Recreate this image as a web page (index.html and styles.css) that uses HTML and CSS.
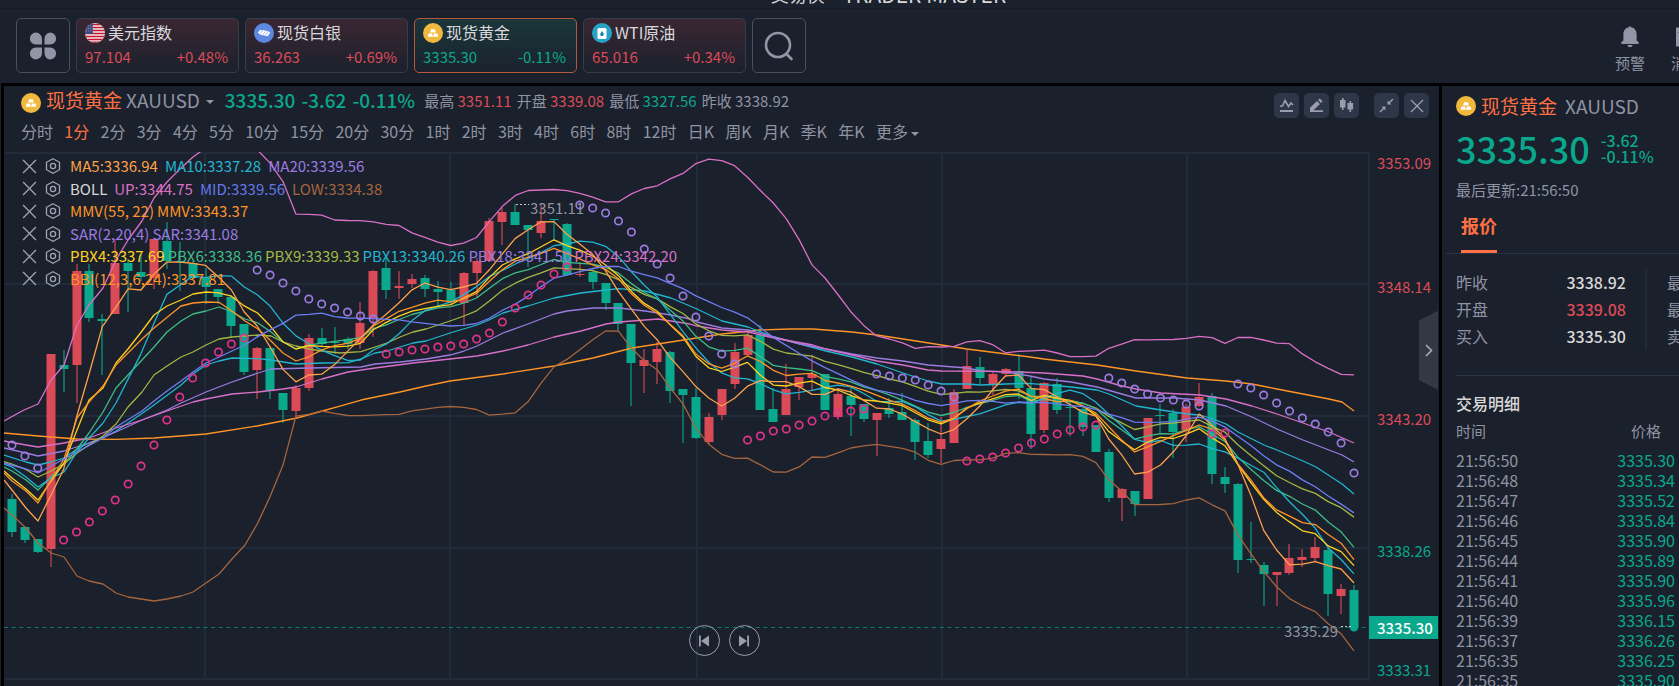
FILE: index.html
```html
<!DOCTYPE html>
<html lang="zh-CN">
<head>
<meta charset="utf-8">
<title>现货黄金 XAUUSD</title>
<link rel="stylesheet" href="styles.css">
</head>
<body>
<svg class="defs" aria-hidden="true">
  <defs>
    <symbol id="gold" viewBox="0 0 20 20">
      <circle cx="10" cy="10" r="10" fill="#f0b93e"/>
      <path d="M8 6.300h4l.8 3.100H7.200zM5.500 10.600h3.700l.7 3.100H4.700zM10.800 10.600h3.700l.8 3.100h-5.200z" fill="#fff"/>
    </symbol>
    <symbol id="close" viewBox="0 0 14 14"><path d="M1 1l12 12M13 1L1 13" fill="none" stroke="#a0a4b2" stroke-width="1.200"/></symbol>
    <symbol id="gear" viewBox="0 0 16 16">
      <path d="M8 .8l6.500 3.500v7.400L8 15.200 1.500 11.700V4.300z" fill="none" stroke="#a0a4b2" stroke-width="1.300"/>
      <circle cx="8" cy="8" r="2.600" fill="none" stroke="#a0a4b2" stroke-width="1.300"/>
    </symbol>
  </defs>
</svg>
<div class="brand"><span>交易侠</span><span class="brand-en">TRADER MASTER</span></div>
<header class="header">
  <nav class="quotes">
    <button class="square" aria-label="全部">
      <svg width="28" height="28" viewBox="0 0 28 28" fill="#9195a5"><path d="M7 .5a6.200 6.200 0 0 1 6 6.200V12.500H6.800A6 6 0 0 1 7 .5zM21 .5a6 6 0 0 1 .2 12H15.500V6.700A6.200 6.200 0 0 1 21 .5zM7 27.500a6 6 0 0 1-.2-12H13v5.800a6.200 6.200 0 0 1-6 6.200zM21 27.500a6.200 6.200 0 0 1-5.500-6.200V15.500h5.700a6 6 0 0 1-.2 12z"/></svg>
    </button>
    <button class="card up">
      <span class="card-name"><svg width="20" height="20" viewBox="0 0 20 20"><clipPath id="flag"><circle cx="10" cy="10" r="10"/></clipPath><g clip-path="url(#flag)"><path fill="#f2eef2" d="M0 0h20v20H0z"/><path d="M0 1.500h20M0 4.500h20M0 7.500h20M0 10.500h20M0 13.500h20M0 16.500h20M0 19.300h20" stroke="#c8142f" stroke-width="1.500"/><path fill="#3f4a80" d="M0 0h8v11H0z"/><path d="M1 3h7M1 5.500h7M1 8h7" stroke="#8d94bd" stroke-width=".8" stroke-dasharray="1 1"/></g></svg><span>美元指数</span></span>
      <span class="card-data"><span>97.104</span><span>+0.48%</span></span>
    </button>
    <button class="card up">
      <span class="card-name"><svg width="20" height="20" viewBox="0 0 20 20"><circle cx="10" cy="10" r="10" fill="#5c88e0"/><path d="M3.800 9.500L6.500 6.800l2 .6.800-.6 1.800 1 .8-.4 1.700 1.100.8-.3 1.800 1.300-2.400 3.700-1.600-.5-.8.4-1.800-1-.8.4-1.800-1-.7.200z" fill="#fff"/><path d="M6.300 10.500l2.500-3M8.800 11.500l2.500-3M11.200 12.500l2.500-3.200" stroke="#5c88e0" stroke-width=".6"/></svg><span>现货白银</span></span>
      <span class="card-data"><span>36.263</span><span>+0.69%</span></span>
    </button>
    <button class="card down active">
      <span class="card-name"><svg width="20" height="20"><use href="#gold"/></svg><span>现货黄金</span></span>
      <span class="card-data"><span>3335.30</span><span>-0.11%</span></span>
    </button>
    <button class="card up">
      <span class="card-name"><svg width="20" height="20" viewBox="0 0 20 20"><circle cx="10" cy="10" r="10" fill="#27a3c6"/><rect x="5.500" y="5" width="9" height="11" rx="1.500" fill="#fff"/><path d="M10 7.800l1.600 2.600a1.800 1.800 0 1 1-3.200 0z" fill="#1789a8"/></svg><span>WTI原油</span></span>
      <span class="card-data"><span>65.016</span><span>+0.34%</span></span>
    </button>
    <button class="square" aria-label="搜索">
      <svg width="30" height="30" viewBox="0 0 30 30" fill="none" stroke="#9195a5" stroke-width="2.600" stroke-linecap="round"><circle cx="14" cy="14" r="12"/><path d="M22.500 23l5 5"/></svg>
    </button>
  </nav>
  <div class="actions">
    <a class="action" href="#alert"><svg width="22" height="22" viewBox="0 0 22 22" fill="#9195a5"><path d="M10 1.200a1 1 0 0 1 2 0c3.600.7 5.600 3.300 5.600 7v6.300l2 1.500q.8 1.800-.6 2H3q-1.400-.2-.6-2l2-1.500V8.200c0-3.700 2-6.300 5.600-7zM8.200 19h5.600q-.8 2.200-2.800 2.200T8.200 19z"/></svg>预警</a>
    <a class="action" href="#message"><svg width="24" height="22" viewBox="0 0 24 22"><path d="M2 1.500h20v19H2z" fill="#9195a5"/><path d="M5 6l7 5 7-5" fill="none" stroke="#1a202c" stroke-width="2"/></svg>消息</a>
  </div>
</header>
<div class="body">
  <main class="main">
    <div class="title">
      <svg width="20" height="20"><use href="#gold"/></svg>
      <h1>现货黄金</h1>
      <button class="symbol">XAUUSD<i class="caret"></i></button>
      <strong class="last">3335.30</strong><strong class="last">-3.62</strong><strong class="last">-0.11%</strong>
      <span class="stats"><span>最高 <b class="r">3351.11</b></span><span>开盘 <b class="r">3339.08</b></span><span>最低 <b class="g">3327.56</b></span><span>昨收 3338.92</span></span>
    </div>
    <div class="tools">
      <button aria-label="指标"><svg width="15" height="15" viewBox="0 0 15 15" fill="none" stroke="#9a9eac" stroke-width="1.600"><path d="M1 8h2.500L6 2.500 9.500 8.500 12 5l2 2"/><path d="M1 13h13" stroke-width="2"/></svg></button>
      <button aria-label="画线"><svg width="15" height="15" viewBox="0 0 15 15" fill="#9a9eac"><path d="M1 13V9.800L8 3l3 3-6.500 6.200H14V14H1zM9 2l1.800-1.500L13.500 3.200 12 5z"/></svg></button>
      <button aria-label="图表类型"><svg width="15" height="15" viewBox="0 0 15 15" fill="#9a9eac"><path d="M3 0h1.600v2h1.900v7.500H4.600V12H3V9.500H1V2h2zM10.500 3h1.600v2h2v6.500h-2V14h-1.600v-2.500h-2V5h2z"/></svg></button>
      <button class="apart" aria-label="缩小"><svg width="15" height="15" viewBox="0 0 15 15" fill="#9a9eac" stroke="#9a9eac"><path d="M14 1l-4 4M1 14l4-4" stroke-width="1.500"/><path d="M8.500 2.500v4h4zM6.500 12.500v-4h-4z" stroke="none"/></svg></button>
      <button aria-label="关闭"><svg width="14" height="14"><use href="#close"/></svg></button>
    </div>
    <nav class="periods">
      <button>分时</button><button class="on">1分</button><button>2分</button><button>3分</button><button>4分</button><button>5分</button><button>10分</button><button>15分</button><button>20分</button><button>30分</button><button>1时</button><button>2时</button><button>3时</button><button>4时</button><button>6时</button><button>8时</button><button>12时</button><button>日K</button><button>周K</button><button>月K</button><button>季K</button><button>年K</button><button>更多<i class="caret"></i></button>
    </nav>
    <section class="chart">
      <svg class="plot" id="plot" viewBox="4 150 1435 536" preserveAspectRatio="xMinYMin slice" role="img" aria-label="K线图"></svg>
      <ul class="legend" id="legend"></ul>
      <div class="player">
        <button aria-label="后退"><svg width="12" height="12" viewBox="0 0 12 12" fill="#9a9eac"><path d="M1 .5h1.800v11H1zM11 .5v11L3 6z"/></svg></button>
        <button aria-label="前进"><svg width="12" height="12" viewBox="0 0 12 12" fill="#9a9eac"><path d="M9.200.5H11v11H9.200zM1 .5v11L9 6z"/></svg></button>
      </div>
      <button class="fold" aria-label="收起"><svg width="8" height="13" viewBox="0 0 8 13" fill="none" stroke="#a9adb9" stroke-width="1.600"><path d="M1 1l5.500 5.500L1 12"/></svg></button>
    </section>
  </main>
  <aside class="side">
    <div class="side-in">
      <div class="side-title"><svg width="20" height="20"><use href="#gold"/></svg><h2>现货黄金</h2><span>XAUUSD</span></div>
      <div class="side-price"><strong>3335.30</strong><div><b>-3.62</b><b>-0.11%</b></div></div>
      <p class="updated">最后更新:21:56:50</p>
      <div class="tabs"><button>报价</button></div>
      <div class="facts">
        <dl><dt>昨收</dt><dd>3338.92</dd><dt>开盘</dt><dd class="r">3339.08</dd><dt>买入</dt><dd>3335.30</dd></dl>
        <dl class="second"><dt>最高</dt><dd class="r">3351.11</dd><dt>最低</dt><dd class="g">3327.56</dd><dt>卖出</dt><dd>3335.60</dd></dl>
      </div>
      <h3>交易明细</h3>
      <table class="trades">
        <thead><tr><th>时间</th><th class="price-head">价格</th></tr></thead>
        <tbody>
          <tr><td>21:56:50</td><td>3335.30</td></tr>
          <tr><td>21:56:48</td><td>3335.34</td></tr>
          <tr><td>21:56:47</td><td>3335.52</td></tr>
          <tr><td>21:56:46</td><td>3335.84</td></tr>
          <tr><td>21:56:45</td><td>3335.90</td></tr>
          <tr><td>21:56:44</td><td>3335.89</td></tr>
          <tr><td>21:56:41</td><td>3335.90</td></tr>
          <tr><td>21:56:40</td><td>3335.96</td></tr>
          <tr><td>21:56:39</td><td>3336.15</td></tr>
          <tr><td>21:56:37</td><td>3336.26</td></tr>
          <tr><td>21:56:35</td><td>3336.25</td></tr>
          <tr><td>21:56:35</td><td>3335.90</td></tr>
        </tbody>
      </table>
    </div>
  </aside>
</div>
<script src="chart.js"></script>
</body>
</html>
```

FILE: styles.css
```css
* { box-sizing: border-box; }
body {
  margin: 0;
  height: 100vh;
  overflow: hidden;
  display: flex;
  flex-direction: column;
  background: #1a202c;
  color: #8f93a2;
  font-family: "Noto Sans CJK SC", sans-serif;
  font-size: 16px;
  line-height: 20px;
}
button {
  font: inherit;
  color: inherit;
  background: none;
  border: 0;
  padding: 0;
  cursor: pointer;
}
svg { display: block; flex: none; }
h1, h2, h3, p, dl, dd, ul { margin: 0; padding: 0; }
b { font-weight: 400; }
i { font-style: normal; }
.defs { position: absolute; width: 0; height: 0; }
.r { color: #dc4b57; }
.g { color: #0ba78c; }

.brand {
  flex: none;
  height: 9px;
  overflow: hidden;
  border-bottom: 1px solid #161b26;
  display: flex;
  align-items: flex-end;
  justify-content: center;
  gap: 18px;
  padding: 0 0 4px 98px;
  color: #d8d8d8;
  font-size: 18px;
}
.brand-en { font-size: 21px; }

.header {
  flex: none;
  height: 74px;
  padding: 9px 0 0 16px;
  display: flex;
  justify-content: space-between;
  overflow: hidden;
}
.quotes { display: flex; gap: 6px; height: 55px; }
.square {
  width: 54px;
  border: 1px solid #4a4f5c;
  border-radius: 5px;
  display: flex;
  align-items: center;
  justify-content: center;
}
.card {
  width: 163px;
  padding: 4px 10px 5px 8px;
  border: 1px solid #363c4a;
  border-radius: 5px;
  display: flex;
  flex-direction: column;
  justify-content: space-between;
}
.up { background: linear-gradient(#3a2733, #1b212d); color: #dc4b57; }
.down { background: linear-gradient(#1b363b, #1a222e); color: #0ba78c; }
.active { border-color: #b5583a; }
.card-name { display: flex; align-items: center; gap: 3px; color: #d8d9dc; }
.card-name span { padding-bottom: 2px; line-height: 18px; }
.card-data { display: flex; justify-content: space-between; font-size: 15px; }
.actions { display: flex; width: 80px; gap: 26px; padding: 8px 0 0 16px; }
.action {
  flex: 0 0 30px;
  display: flex;
  flex-direction: column;
  align-items: center;
  gap: 5px;
  color: inherit;
  font-size: 15px;
  text-decoration: none;
  white-space: nowrap;
}

.body {
  flex: 1;
  min-height: 0;
  display: flex;
  gap: 3px;
  background: #000;
  border-left: 1px solid #1a202c;
  padding: 3px 0 0 3px;
}
.main {
  flex: 1;
  min-width: 0;
  background: #1a202c;
  display: grid;
  grid-template: 32px 32px 1fr / 1fr auto;
}
.title {
  display: flex;
  align-items: center;
  padding: 0 0 5px 17px;
  white-space: nowrap;
}
.title > svg { margin-top: 6px; }
.title h1 { font-size: 19px; font-weight: 400; color: #ff7043; margin: 0 4px 0 5px; }
.symbol { font-size: 19px; margin-right: 11px; }
.caret {
  display: inline-block;
  border: 4px solid transparent;
  border-top-color: #9195a5;
  border-bottom: 0;
  vertical-align: middle;
  margin-left: 6px;
}
.periods .caret { margin-left: 3px; }
.last { font-size: 19px; font-weight: 500; color: #0ba78c; margin-right: 6px; }
.stats { display: flex; gap: 5px; font-size: 15px; padding: 2px 0 0 3px; }
.tools { display: flex; gap: 5px; padding: 7px 10px 0 0; }
.tools button {
  width: 25px;
  height: 25px;
  border-radius: 5px;
  background: #2d3748;
  display: flex;
  align-items: center;
  justify-content: center;
}
.tools .apart { margin-left: 10px; }
.periods {
  grid-column: 1 / 3;
  display: flex;
  justify-content: space-between;
  max-width: 915px;
  padding-left: 17px;
  align-items: flex-start;
  white-space: nowrap;
  line-height: 26px;
}
.on { color: #ff7043; }

.chart { grid-column: 1 / 3; position: relative; min-height: 0; overflow: hidden; }
.plot { width: 100%; height: 100%; }
.plot text { font-size: 15px; fill: #8f93a2; }
.plot .r { fill: #dc4b57; }
.plot .g { fill: #0ba78c; }
.plot .tag { fill: #fff; font-weight: 500; }
.grid { stroke: #222b3a; stroke-width: 2; }
.legend {
  position: absolute;
  left: 18px;
  top: 5px;
  height: 135px;
  display: flex;
  flex-direction: column;
  justify-content: space-between;
  list-style: none;
  font-size: 15px;
  line-height: 22px;
  white-space: nowrap;
}
.legend li { display: flex; align-items: center; }
.legend button { margin-right: 8px; }
.legend button + button { margin-right: 9px; }
.legend .wide { margin-right: 7px; }
.legend .near { margin-right: 3px; }
.player {
  position: absolute;
  left: 0;
  right: 0;
  bottom: 30px;
  display: flex;
  justify-content: center;
  gap: 9px;
  padding-left: 5px;
}
.player button {
  width: 31px;
  height: 31px;
  border: 1px solid #9a9eac;
  border-radius: 50%;
  display: flex;
  align-items: center;
  justify-content: center;
}
.fold {
  position: absolute;
  right: 1px;
  top: 30%;
  width: 19px;
  height: 79px;
  background: #333844;
  clip-path: polygon(0 12%, 100% 0, 100% 100%, 0 88%);
  display: flex;
  align-items: center;
  justify-content: center;
}

.side { flex: 0 0 237px; background: #1a202c; overflow: hidden; }
.side-in { width: 420px; padding: 10px 0 0 14px; }
.side-title { display: flex; align-items: center; font-size: 19px; }
.side-title h2 { font-size: 19px; font-weight: 400; color: #ff7043; margin: 0 8px 0 5px; }
.side-price {
  display: flex;
  align-items: center;
  gap: 11px;
  height: 64px;
  color: #0ba78c;
}
.side-price strong { font-size: 36px; font-weight: 500; line-height: 40px; }
.side-price b { display: block; font-weight: 500; line-height: 16px; }
.updated { font-size: 15px; }
.tabs { margin: 12px 0 0 -10px; padding-left: 15px; border-bottom: 1px solid #2a3343; }
.tabs button {
  font-size: 18px;
  font-weight: 700;
  color: #ff7043;
  padding: 0 0 12px;
  height: 41px;
  border-bottom: 3px solid #ff7043;
}
.facts { display: flex; padding: 15px 0 25px; border-bottom: 1px solid #2d3646; }
.facts dl {
  width: 191px;
  padding-right: 19px;
  border-right: 2px solid #222937;
  display: grid;
  grid-template-columns: auto auto;
  justify-content: space-between;
  line-height: 27px;
}
.facts .second { padding: 0 0 0 20px; border: 0; }
.facts dd { text-align: right; font-weight: 500; }
.facts dd:not([class]) { color: #d8d8d8; }
.side h3 { font-size: 16px; font-weight: 500; color: #d8d8d8; margin: 17px 0 6px; }
.trades { border-collapse: collapse; width: 219px; }
.trades th { padding: 2px 0 9px; font-size: 15px; font-weight: 400; text-align: left; }
.trades .price-head { text-align: right; padding-right: 14px; }
.trades td { padding: 0; }
.trades td + td { text-align: right; color: #0ba78c; }
```

FILE: chart.js
```js
// Candles: direction (1 = up), body top, body bottom, wick top, wick bottom
const candles = [
[0,499,532,494,537],[0,527,540,527,543],[0,539,552,539,553],[1,354,549,354,567],[0,365,369,350,392],
[1,271,365,264,403],[0,271,318,264,322],[0,319,321,314,375],[1,263,314,239,314],[0,263,271,259,312],
[0,272,277,254,281],[1,239,278,239,289],[0,241,261,222,269],[0,261,262,242,291],[0,263,278,261,279],
[0,277,287,268,304],[0,289,297,289,304],[0,297,326,295,337],[0,324,372,324,375],[1,348,370,347,399],
[0,348,391,347,399],[0,393,410,393,423],[1,388,411,385,418],[1,338,388,334,391],[0,338,344,328,347],
[0,342,343,327,354],[0,339,344,337,349],[1,323,343,302,349],[1,271,319,270,337],[0,268,290,258,299],
[1,286,288,271,299],[1,279,284,274,288],[0,278,289,275,297],[0,289,292,281,308],[0,290,302,282,305],
[1,273,303,272,325],[1,261,273,258,298],[1,221,261,218,261],[1,212,222,207,245],[0,212,225,204,225],
[0,225,230,225,267],[1,221,233,204,238],[0,219,220,219,241],[0,224,275,223,275],[1,274,275,262,277],
[0,272,282,269,289],[0,283,303,283,310],[0,303,324,303,332],[0,324,363,324,406],[1,360,366,349,393],
[1,349,362,342,384],[0,352,391,351,403],[0,389,395,389,443],[0,397,438,388,439],[1,417,442,413,444],
[1,389,415,389,420],[1,352,384,343,389],[1,335,355,332,355],[0,335,410,325,410],[0,409,422,388,422],
[1,389,415,364,415],[1,377,387,377,400],[1,374,378,355,390],[0,374,410,374,410],[1,394,417,388,420],
[0,396,405,386,436],[0,404,419,404,422],[1,413,420,413,456],[0,408,414,398,418],[0,412,420,393,420],
[0,420,442,418,460],[0,441,455,423,458],[1,439,449,417,463],[1,392,443,389,443],[1,366,389,349,389],
[0,367,378,357,384],[1,374,384,372,395],[1,369,374,368,377],[0,371,388,354,399],[0,388,434,376,449],
[1,383,430,382,433],[0,384,410,378,414],[0,407,408,402,436],[0,409,427,407,436],[0,425,452,425,452],
[0,452,498,449,502],[1,489,498,488,521],[0,491,504,491,516],[1,418,499,418,499],[0,415,416,404,433],
[0,413,432,409,458],[1,407,430,404,442],[1,397,406,383,407],[0,396,474,393,484],[0,477,484,467,493],
[0,484,560,483,573],[0,559,560,522,563],[0,565,574,562,606],[1,572,575,572,606],[1,558,573,544,575],
[1,557,560,549,567],[1,547,558,537,562],[0,550,594,546,616],[1,589,596,584,614],[0,590,628,585,628]];
const X = i => 12 + 12.904 * i;
const close = candles.map(c => c[0] ? c[1] : c[2]);
const mean = (i, n) => close.slice(i - n + 1, i + 1).reduce((a, b) => a + b, 0) / n;
const dev = i => { const m = mean(i, 20); return Math.sqrt(close.slice(i - 19, i + 1).reduce((a, b) => a + (b - m) ** 2, 0) / 20); };
const ema = n => { let e = 520; return close.map(c => e += (c - e) * 2 / (n + 1)); };
const pbx = n => { const e = ema(n); return i => (e[i] + mean(i, 2 * n) + mean(i, 4 * n)) / 3; };
const lines = [
 ['#ff9427', [4,433,38,436,77,439,116,439.3,154,438,206,434,257,426,297,418,326,410,340,406,361,400,400,392,426,386,450,381,503,374,554,366,593,358,632,348,690,339,722,334,760,330,790,329,813,329,852,332,877,335,916,341,967,349,1030,357,1044,359,1097,365,1136,371,1187,378,1226,381,1252,384,1277,389,1303,394,1329,399,1342,402,1354,411]],
 ['#22b5cf', [4,455,26,462,38,465,51,462,64,458,77,449,89,443,103,438,116,431,128,423,147,410,154,405,181,385,193,374,206,365,219,361,232,358,258,358.7,271,360,296,364,322,363,348,362.7,361,359,375,353,387,351,413,343,426,341,450,333,477,325,489,320,503,313,528,306,554,298,581,293,606,290,619,288.7,645,291,671,298,697,309,722,321,748,327,774,337,800,344,826,351,852,357,877,364,903,373,928,381,942,384,967,384,981,385,1006,384,1028,383.300,1044,384.700,1071,387,1097,390,1109,394,1136,406,1161,410,1187,414,1200,415,1213,419,1226,424,1238,432,1264,445,1277,450,1303,461,1316,467,1342,484,1354,494]],
 ['#9b7be0', [4,448,26,453,38,456,64,451,89,443,116,432,142,420,167,410,181,403,206,392,232,382,258,373,271,369,309,368,361,367,375,364,400,362,426,359,450,355,464,351,477,346,503,333,528,324,554,314,567,311,593,308,619,308,645,311,671,315,690,319,697,322,722,328,748,330,774,337,800,344,826,349,852,354,877,358,903,361,928,365,954,367,967,368,981,371,1006,372,1030,376,1044,379,1071,382,1097,387,1136,398,1174,398,1200,400,1226,406,1252,417,1277,429,1303,440,1342,455,1354,462]],
 ['#d770c8', [4,441,26,445,38,447,64,443,89,438,116,428,142,420,167,411,193,402,206,399,232,394,258,392,283,389,296,387,322,379,348,372,375,368,413,363,450,359,477,356,503,351,528,345,554,337,581,331,606,324,619,322,645,320,658,319,690,324,697,326,722,330,748,332,774,338,813,345,826,349,852,355,877,361,903,365,928,370,942,371,993,371.300,1019,372,1044,373,1083,376,1097,379,1122,386,1136,389,1161,393,1200,395,1226,399,1252,406,1277,414,1303,423,1329,432,1354,443]],
 ['#a3b843', [4,461.500,12,464,26,469.500,38,477,51,471,64,464,77,453,89,445,103,436,116,424,128,407,142,392,154,375,167,366,181,357,193,352,206,345,219,339,232,337,258,335,271,336,283,342,296,346,309,349,322,351,340,353,361,351.700,375,347,387,343,400,337,413,332,426,329,450,321,464,316], 36, pbx(9)],
 ['#3fbd86', [4,467,12,471,26,480,38,490,51,477,64,464,77,449,89,433,103,412,116,388,128,375,142,360,154,347,167,332,181,321,193,314,206,311,219,307,232,312,245,319,258,323,271,332,283,342,296,349], 23, pbx(6)],
 ['#22b5cf', [4,464,12,467,26,477,38,487,51,478,64,472,77,452,89,438,103,423,116,403], 9, i => mean(i, 10)],
 ['#ffd21f', [4,471,12,478,26,489,38,500,51,481,64,463,77,430,89,400,103,388,116,363,128,349,142,331,154,315,167,306,181,300,193,294,206,292], 16, pbx(4)],
 ['#ff9427', [4,473,12,481,26,491,38,503,51,480,64,459,77,418,89,402,103,386,116,365,142,339,154,328,181,306,193,303,206,302,219,302.300,232,311,245,321,258,329,271,341,283,353,296,361], 23, i => (mean(i,3) + mean(i,6) + mean(i,12) + mean(i,24)) / 4],
 ['#ffa04a', [4,480,12,490,26,508,38,521,51,495], 4, i => mean(i, 5)],
 ['#da70c5', [4,421,24,410,38,404,51,380,64,365,77,325,89,305,103,288,116,260,128,240,142,221,154,198,167,182,181,168,193,157,200,152,225,140,245,143], 19, i => mean(i, 20) - 2 * dev(i)],
 ['#a5653f', [4,508,12,515,26,528,38,543,51,553,64,557,77,576,89,581,103,584,116,593,128,597,154,601,167,599,181,596,193,592,206,583,219,574,232,559,245,545], 19, i => mean(i, 20) + 2 * dev(i)],
 ['#6f7df2', [4,463,26,469,38,473,51,466,64,459,77,452,103,438,116,427,142,411,154,401,167,391,181,381,193,372,206,363,219,357,232,351,245,345], 19, i => mean(i, 20)]
];
// SAR runs alternate between above price (violet) and below price (pink)
const sar = [[445,456,468,482],[540,532,522,511,500,484,466,445,420,397,378,363,352,344,338],
[270,275,283,291,299,304,308,312,316,319],[354,352,350,349,347,346,344,339,333,322,308,295,285,274,267],
[205,208,213,221,232,249,264,278,296,317,336,354,364],[440,436,431,429,425,421,416,413,411,409],
[374,376,378,380,385,391,397],[461,459,457,453,448,443,439,434,430,427,425],
[378,383,389,394,398,400,404,406],[434,433],[384,388,395,403,411,418,424,432,443,473]];

let out = '<clipPath id="area"><path d="M4 152h1364v534H4z"/></clipPath>';
for (const y of [153, 284, 416, 548, 679]) out += `<path class="grid" d="M5 ${y}H1369"/>`;
for (const x of [205, 450, 697, 942, 1187, 1369]) out += `<path class="grid" d="M${x} 152V681"/>`;
out += '<path d="M4 627.500H1368" stroke="#0b7a6a" stroke-dasharray="4 3.670"/>';
let k = 0;
sar.forEach((run, s) => run.forEach(y => { if (k === 3) out += ring(k, y, s); k++; }));
function ring(i, y, s) { return `<circle cx="${X(i)}" cy="${y}" r="3.700" fill="none" stroke="${s % 2 ? '#e0338a' : '#9b7be0'}" stroke-width="1.700"/>`; }
candles.forEach(([up, a, b, h, l], i) => {
  const c = up ? '#db4b57' : '#0aa88c', x = Math.round(X(i));
  out += `<path d="M${x} ${h}V${l}" stroke="${c}" stroke-opacity=".85" stroke-width="1.300"/><rect x="${x - 4.5}" y="${a}" width="9" height="${b - a}" fill="${c}"/>`;
});
out += '<g clip-path="url(#area)" fill="none" stroke-width="1.300" stroke-linejoin="round">';
for (const [color, pts, from, fn] of lines) {
  let d = 'M';
  for (let i = 0; i < pts.length; i += 2) d += `${pts[i]} ${pts[i + 1]} `;
  if (fn) for (let i = from; i < close.length; i++) d += `${X(i).toFixed(1)} ${fn(i).toFixed(1)} `;
  out += `<path d="${d}" stroke="${color}"/>`;
}
out += '</g>';
k = 0;
sar.forEach((run, s) => run.forEach(y => { if (k !== 3) out += ring(k, y, s); k++; }));
out += '<circle cx="1354" cy="627.500" r="4" fill="#0aa88c"/>';
out += '<path d="M516 204.500H529M1341 626.500H1352" stroke="#c8cad0" stroke-dasharray="2 2"/><text x="530" y="214">3351.11</text><text x="1284" y="637">3335.29</text>';
[['3353.09',169,'r'],['3348.14',293,'r'],['3343.20',425,'r'],['3338.26',557,'g'],['3333.31',676,'g']].forEach(([t, y, c]) => out += `<text class="${c}" x="1377" y="${y}">${t}</text>`);
out += '<path d="M1369 616h69v23h-69z" fill="#0aa88c"/><text class="tag" x="1377" y="634">3335.30</text>';
document.getElementById('plot').innerHTML = out;

const legend = [
 ['wide', ['MA5:3336.94','#ffa04a'],['MA10:3337.28','#22b5cf'],['MA20:3339.56','#9b7be0']],
 ['wide', ['BOLL','#d8d8d8'],['UP:3344.75','#da70c5'],['MID:3339.56','#6577e8'],['LOW:3334.38','#a5653f']],
 ['near', ['MMV(55, 22)','#ff9427'],['MMV:3343.37','#ff9427']],
 ['near', ['SAR(2,20,4)','#9b7be0'],['SAR:3341.08','#9b7be0']],
 ['near', ['PBX4:3337.69','#ffd21f'],['PBX6:3338.36','#3fbd86'],['PBX9:3339.33','#a3b843'],['PBX13:3340.26','#22b5cf'],['PBX18:3341.50','#9b7be0'],['PBX24:3342.20','#d770c8']],
 ['near', ['BBI(12,3,6,24):3337.81','#ff9427']]
];
document.getElementById('legend').innerHTML = legend.map(([gap, ...items]) =>
  '<li><button aria-label="移除"><svg width="15" height="15"><use href="#close"/></svg></button><button aria-label="设置"><svg width="16" height="16"><use href="#gear"/></svg></button>' +
  items.map(([t, c]) => `<span class="${gap}" style="color:${c}">${t}</span>`).join('') + '</li>').join('');
```
